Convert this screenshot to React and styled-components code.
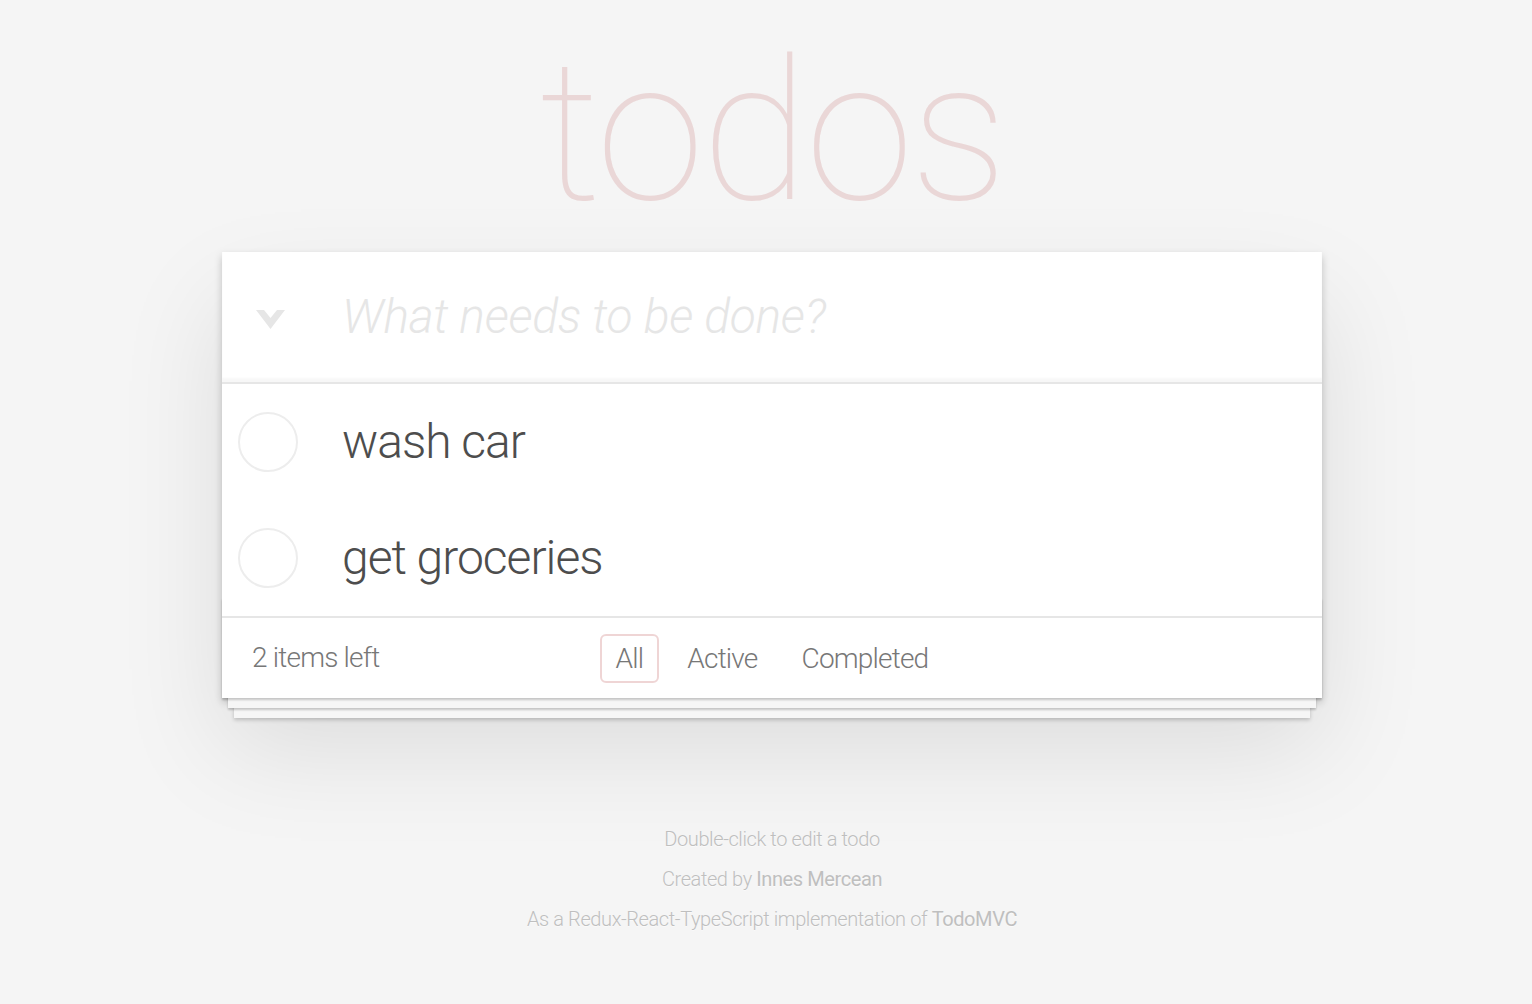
import React from 'react';
import styled, { createGlobalStyle } from 'styled-components';

const GlobalStyle = createGlobalStyle`
  html, body {
    margin: 0;
    padding: 0;
  }
  body {
    background: #f5f5f5;
    color: #4d4d4d;
    font-family: Roboto, "Helvetica Neue", Helvetica, Arial, sans-serif;
    font-weight: 300;
    font-size: 28px;
    line-height: 1.4em;
    -webkit-font-smoothing: antialiased;
  }
`;

const Page = styled.div`
  padding-left: 12px;
  padding-bottom: 60px;
`;

const Wrapper = styled.div`
  max-width: 1100px;
  margin: 0 auto;
`;

const Title = styled.h1`
  margin: 0;
  padding-top: 32px;
  height: 200px;
  margin-bottom: 20px;
  font-size: 196px;
  line-height: 200px;
  font-weight: 100;
  letter-spacing: -3px;
  text-align: center;
  color: rgba(175, 47, 47, 0.15);
  text-rendering: optimizeLegibility;
`;

const Card = styled.section`
  position: relative;
  background: #fff;
  box-shadow: 0 4px 8px 0 rgba(0, 0, 0, 0.2), 0 50px 100px 0 rgba(0, 0, 0, 0.1);
`;

const Header = styled.header`
  display: flex;
  align-items: center;
  box-shadow: inset 0 -4px 2px rgba(0, 0, 0, 0.03);
`;

const ToggleAll = styled.div`
  width: 120px;
  flex-shrink: 0;
  display: flex;
  padding-left: 34px;
  padding-top: 4px;
  box-sizing: border-box;
`;

const NewTodo = styled.input`
  flex: 1;
  min-width: 0;
  border: none;
  outline: none;
  background: transparent;
  padding: 32px 32px 32px 0;
  font-family: inherit;
  font-size: 48px;
  font-weight: 300;
  line-height: 66px;
  letter-spacing: -0.3px;
  color: inherit;
  &::placeholder {
    font-style: italic;
    font-weight: 300;
    color: #e6e6e6;
  }
`;

const Main = styled.section`
  border-top: 2px solid #e6e6e6;
`;

const List = styled.ul`
  margin: 0;
  padding: 0;
  list-style: none;
`;

const Item = styled.li`
  display: flex;
  align-items: center;
  font-size: 48px;
`;

const CheckCell = styled.div`
  width: 120px;
  flex-shrink: 0;
  padding-left: 16px;
  box-sizing: border-box;
`;

const Circle = styled.div`
  width: 60px;
  height: 60px;
  box-sizing: border-box;
  border: 2px solid #ededed;
  border-radius: 50%;
`;

const Label = styled.label`
  display: block;
  padding: 30px 30px 30px 0;
  line-height: 56px;
  letter-spacing: -1px;
  word-break: break-all;
  color: #4d4d4d;
`;

const Footer = styled.footer`
  position: relative;
  display: grid;
  grid-template-columns: 1fr auto 1fr;
  align-items: center;
  height: 80px;
  padding: 0 30px;
  color: #777;
  letter-spacing: -0.8px;
  border-top: 2px solid #e6e6e6;

  &::before {
    content: '';
    position: absolute;
    right: 0;
    bottom: 0;
    left: 0;
    height: 100px;
    overflow: hidden;
    pointer-events: none;
    box-shadow: 0 2px 2px rgba(0, 0, 0, 0.2), 0 16px 0 -6px #f6f6f6,
      0 18px 2px -6px rgba(0, 0, 0, 0.2), 0 32px 0 -12px #f6f6f6,
      0 34px 4px -12px rgba(0, 0, 0, 0.2);
  }
`;

const Count = styled.span`
  position: relative;
  text-align: left;
`;

const Filters = styled.ul`
  position: relative;
  display: flex;
  margin: 0;
  padding: 0;
  list-style: none;
`;

const FilterLink = styled.a`
  display: inline-block;
  margin: 6px;
  padding: 6px 14px;
  line-height: 33px;
  border: 2px solid ${(props) => (props.selected ? 'rgba(175, 47, 47, 0.2)' : 'transparent')};
  border-radius: 6px;
  color: inherit;
  text-decoration: none;
`;

const Info = styled.footer`
  margin: 131px auto 0;
  color: #bfbfbf;
  font-size: 20px;
  letter-spacing: -0.4px;
  text-shadow: 0 1px 0 rgba(255, 255, 255, 0.5);
  text-align: center;

  p {
    line-height: 1;
    margin: 20px 0;
  }
`;

const InfoLink = styled.a`
  color: inherit;
  font-weight: 400;
  text-decoration: none;
`;

const Chevron = () => (
  <svg width="29" height="19" viewBox="0 0 29 19">
    <path d="M0 0 H8 L14.5 8 L21 0 H29 L14.5 19 Z" fill="#e6e6e6" />
  </svg>
);

const todos = [
  { id: 1, text: 'wash car' },
  { id: 2, text: 'get groceries' },
];

const filters = ['All', 'Active', 'Completed'];

const App = () => (
  <Page>
    <GlobalStyle />
    <Wrapper>
      <Title>todos</Title>
      <Card>
        <Header>
          <ToggleAll>
            <Chevron />
          </ToggleAll>
          <NewTodo placeholder="What needs to be done?" />
        </Header>
        <Main>
          <List>
            {todos.map((todo) => (
              <Item key={todo.id}>
                <CheckCell>
                  <Circle />
                </CheckCell>
                <Label>{todo.text}</Label>
              </Item>
            ))}
          </List>
        </Main>
        <Footer>
          <Count>2 items left</Count>
          <Filters>
            {filters.map((name) => (
              <li key={name}>
                <FilterLink href="#" selected={name === 'All'}>
                  {name}
                </FilterLink>
              </li>
            ))}
          </Filters>
          <span />
        </Footer>
      </Card>
      <Info>
        <p>Double-click to edit a todo</p>
        <p>
          Created by <InfoLink href="#">Innes Mercean</InfoLink>
        </p>
        <p>
          As a Redux-React-TypeScript implementation of <InfoLink href="#">TodoMVC</InfoLink>
        </p>
      </Info>
    </Wrapper>
  </Page>
);

export default App;
